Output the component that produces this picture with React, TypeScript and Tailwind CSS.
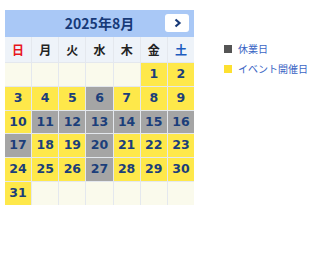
import React from 'react';

const WEEK = ['日', '月', '火', '水', '木', '金', '土'];
const CLOSED = [6, 11, 12, 13, 14, 15, 16, 17, 20, 27];

export default function App() {
  // Aug 2025 starts on Friday (index 5)
  const cells: (number | null)[] = [];
  for (let i = 0; i < 5; i++) cells.push(null);
  for (let d = 1; d <= 31; d++) cells.push(d);
  while (cells.length < 42) cells.push(null);

  return (
    <div className="flex items-start bg-white w-[316px] h-[264px] pt-[10px] pl-[5px] font-['DejaVu_Sans','Noto_Sans_CJK_JP',sans-serif]">
      <div className="w-[189px]">
        <div className="relative flex h-[27px] items-center justify-center bg-[#a9c8f6]">
          <span className="text-[14px] font-bold text-[#173a78] font-['Noto_Sans_CJK_JP',sans-serif]">
            2025年8月
          </span>
          <button className="absolute right-[5px] top-[4px] flex h-[18px] w-[24px] items-center justify-center rounded-[3px] bg-white">
            <svg width="9" height="10" viewBox="0 0 9 10">
              <path d="M2.5 1.5 L6.5 5 L2.5 8.5" fill="none" stroke="#173a78" strokeWidth="2.2" />
            </svg>
          </button>
        </div>
        <div className="grid grid-cols-7 gap-px bg-[#e4e8ee]">
          {WEEK.map((w, i) => (
            <div
              key={w}
              className={`flex h-[25px] items-center justify-center bg-[#eef3f9] text-[12px] font-bold font-['Noto_Sans_CJK_JP',sans-serif] ${
                i === 0 ? 'text-[#e8161c]' : i === 6 ? 'text-[#1d5cbf]' : 'text-[#222]'
              }`}
            >
              {w}
            </div>
          ))}
          {cells.map((d, i) => (
            <div
              key={i}
              className={`flex h-[22.8px] items-center justify-center text-[12.5px] font-bold text-[#1b3e7a] ${
                d === null ? 'bg-[#fafaec]' : CLOSED.includes(d) ? 'bg-[#a5a5a5]' : 'bg-[#fee84a]'
              }`}
            >
              {d}
            </div>
          ))}
        </div>
      </div>
      <div className="ml-[30px] mt-[31px] flex flex-col gap-[5px] text-[10px] leading-[15px] text-[#3a64c4] font-['Noto_Sans_CJK_JP',sans-serif]">
        <div className="flex items-center gap-[6px]">
          <span className="h-[8px] w-[8px] bg-[#555]" />
          <span>休業日</span>
        </div>
        <div className="flex items-center gap-[6px]">
          <span className="h-[8px] w-[8px] bg-[#fde030]" />
          <span>イベント開催日</span>
        </div>
      </div>
    </div>
  );
}
